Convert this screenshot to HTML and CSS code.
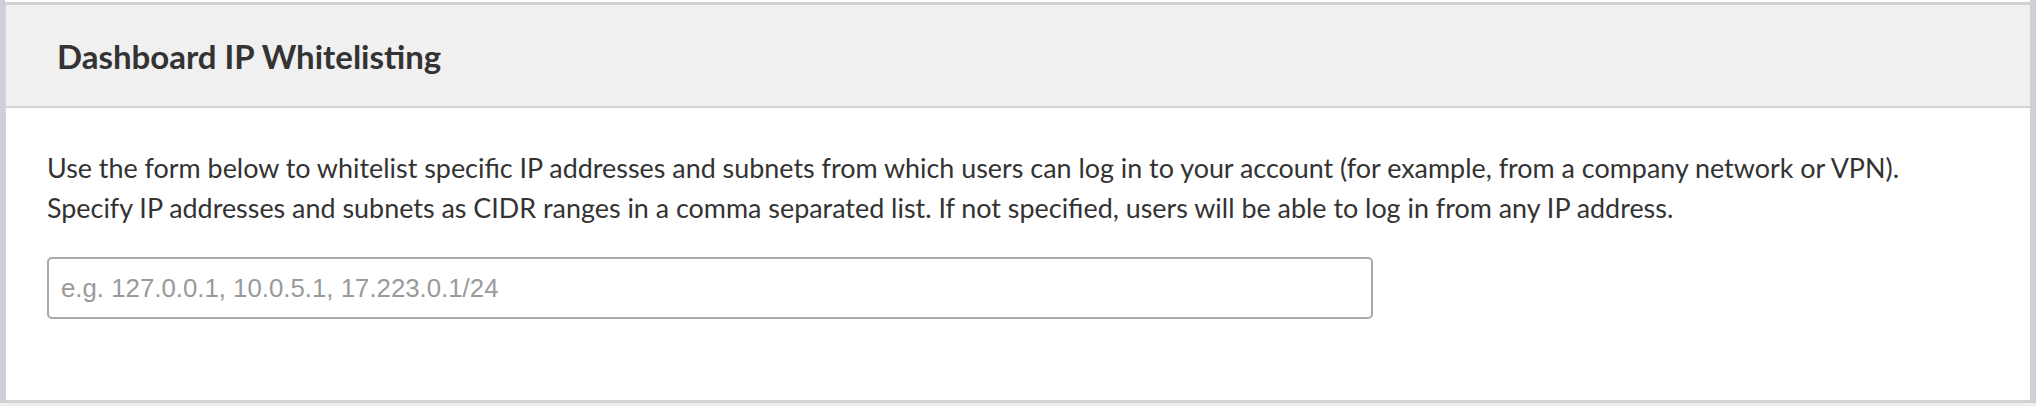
FILE: index.html
```html
<!DOCTYPE html>
<html lang="en">
<head>
<meta charset="utf-8">
<title>Dashboard IP Whitelisting</title>
<link rel="stylesheet" href="styles.css">
</head>
<body>
<div class="frame">
  <section class="card">
    <header class="card-header">
      <h2 class="card-title">Dashboard IP Whitelisting</h2>
    </header>
    <div class="card-body">
      <p class="intro">Use the form below to whitelist specific IP addresses and subnets from which users can log in to your account (for example, from a company network or VPN).<br>Specify IP addresses and subnets as CIDR ranges in a comma separated list. If not specified, users will be able to log in from any IP address.</p>
      <input class="ip-input" type="text" placeholder="e.g. 127.0.0.1, 10.0.5.1, 17.223.0.1/24">
    </div>
  </section>
</div>
</body>
</html>
```

FILE: styles.css
```css
html, body {
  margin: 0;
  padding: 0;
}

body {
  background: #efefef;
  font-family: Lato, "Noto Sans", sans-serif;
  color: #333333;
}

.frame {
  box-sizing: border-box;
  height: 403px;
  padding-top: 2px;
  background: #ffffff;
  border-left: 5px solid #cdd0d6;
  border-right: 6px solid #cdd0d6;
  display: flex;
  flex-direction: column;
}

.card {
  flex: 1;
  display: flex;
  flex-direction: column;
  border: 3px solid #d3d3d3;
  border-left-width: 1px;
  border-right-width: 0;
  background: #ffffff;
}

.card-header {
  height: 101px;
  background: #f0f0f0;
  border-bottom: 2px solid #d3d3d3;
  display: flex;
  align-items: center;
  padding-left: 51px;
}

.card-title {
  margin: 0;
  font-size: 33px;
  font-weight: 700;
  color: #333333;
}

.card-body {
  flex: 1;
  padding: 40px 0 0 41px;
}

.intro {
  margin: 0;
  font-size: 26.9px;
  line-height: 40px;
  color: #333333;
  white-space: nowrap;
}

.ip-input {
  display: block;
  box-sizing: border-box;
  margin-top: 29px;
  width: 1326px;
  height: 62px;
  border: 2px solid #aaaaaa;
  border-radius: 5px;
  padding: 0 12px;
  font-family: "Liberation Sans", Arial, sans-serif;
  font-size: 25.8px;
  color: #333333;
  background: #ffffff;
  outline: none;
}

.ip-input::placeholder {
  color: #9a9a9a;
}
```
